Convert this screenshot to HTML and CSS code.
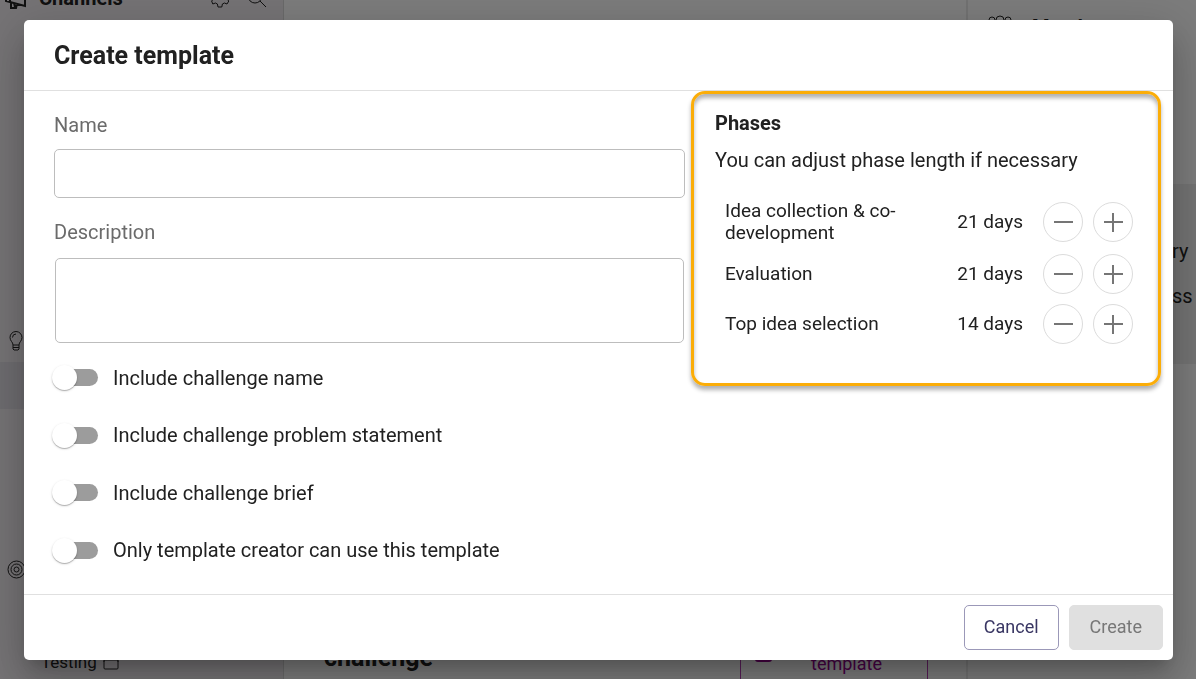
FILE: index.html
```html
<!DOCTYPE html>
<html lang="en">
<head>
<meta charset="utf-8">
<meta name="viewport" content="width=device-width, initial-scale=1">
<title>Create template</title>
<link rel="stylesheet" href="styles.css">
</head>
<body>
<div class="app" aria-hidden="true">
  <aside class="sidebar">
    <div class="sidebar-head">
      <svg width="22" height="22" viewBox="0 0 22 22" class="line-icon horn"><path d="M1 6v8l4 1 15 4V1L5 6zM5 6v9M6 15v6h5l1-4M9 16l1 4"/></svg>
      <h2>Channels</h2>
      <svg width="18" height="20" viewBox="0 0 18 20" class="line-icon thin gear"><path d="M7 1h4l.6 3 2 1 2.800-1 1.400 3-2 2v2l2 2-1.800 3-2.600-1-2 1-.6 3H7l-.6-3-2-1-2.600 1L.600 13l2-2V9l-2-2 1.400-3 2.800 1 2-1z"/></svg>
      <svg width="20" height="20" viewBox="0 0 20 20" class="line-icon thin"><circle cx="8" cy="8" r="7"/><path d="M13 13l6 6"/></svg>
    </div>
    <div class="side-item ideas"><svg width="14" height="20" viewBox="0 0 14 20" class="line-icon"><path d="M4 14c0-3-3-4-3-7.500a6 6 0 0 1 12 0C13 10 10 11 10 14zM4 16.500h6M5 19h4M4 14v4l1 1M10 14v4l-1 1M3.500 6.500A3.500 3.500 0 0 1 7 3"/></svg></div>
    <div class="side-item active"></div>
    <div class="side-item goals"><svg width="19" height="19" viewBox="0 0 19 19" class="line-icon"><circle cx="9.500" cy="9.500" r="8.500"/><circle cx="9.500" cy="9.500" r="5.500"/><circle cx="9.500" cy="9.500" r="2.500"/></svg></div>
    <div class="side-item testing">Testing <svg width="16" height="16" viewBox="0 0 16 16" class="line-icon"><rect x="1" y="6" width="14" height="9" rx="1"/><path d="M1 8V4h14v4"/></svg></div>
  </aside>
  <main class="content">
    <h2>challenge</h2>
    <div class="template-action">
      <svg width="17" height="17" viewBox="0 0 17 17" class="line-icon"><rect x="1" y="1" width="15" height="15" rx="2"/></svg>
      <span>template</span>
    </div>
  </main>
  <aside class="members">
    <div class="members-head">
      <svg width="24" height="22" viewBox="0 0 24 22" class="line-icon thin"><circle cx="12" cy="5" r="4"/><circle cx="4" cy="5" r="3"/><circle cx="20" cy="5" r="3"/><path d="M5 20c0-6 3-9 7-9s7 3 7 9z"/></svg>
      <h2>Members</h2>
    </div>
    <div class="members-card"><span>ry</span><span>ss</span></div>
  </aside>
</div>

<div class="backdrop">
  <form class="dialog" role="dialog" aria-modal="true" aria-labelledby="dialog-title">
    <header class="dialog-head"><h1 id="dialog-title">Create template</h1></header>
    <div class="dialog-body">
      <section class="fields">
        <label for="name" class="field-label">Name</label>
        <input type="text" id="name" class="text-box">
        <label for="description" class="field-label">Description</label>
        <textarea id="description" class="text-area"></textarea>
        <div class="toggles">
          <label class="toggle"><input type="checkbox" class="switch">Include challenge name</label>
          <label class="toggle"><input type="checkbox" class="switch">Include challenge problem statement</label>
          <label class="toggle"><input type="checkbox" class="switch">Include challenge brief</label>
          <label class="toggle"><input type="checkbox" class="switch">Only template creator can use this template</label>
        </div>
      </section>
      <section class="phases">
        <h2>Phases</h2>
        <p>You can adjust phase length if necessary</p>
        <ul class="phase-list">
          <li class="phase">
            <span class="phase-name">Idea collection &amp; co-development</span><span class="days">21 days</span>
            <button type="button" class="step" aria-label="Shorten idea collection"><svg width="20" height="20" viewBox="0 0 20 20"><path d="M1 10h19"/></svg></button>
            <button type="button" class="step" aria-label="Lengthen idea collection"><svg width="20" height="20" viewBox="0 0 20 20"><path d="M1 10h19M10 1v19"/></svg></button>
          </li>
          <li class="phase">
            <span class="phase-name">Evaluation</span><span class="days">21 days</span>
            <button type="button" class="step" aria-label="Shorten evaluation"><svg width="20" height="20" viewBox="0 0 20 20"><path d="M1 10h19"/></svg></button>
            <button type="button" class="step" aria-label="Lengthen evaluation"><svg width="20" height="20" viewBox="0 0 20 20"><path d="M1 10h19M10 1v19"/></svg></button>
          </li>
          <li class="phase">
            <span class="phase-name">Top idea selection</span><span class="days">14 days</span>
            <button type="button" class="step" aria-label="Shorten top idea selection"><svg width="20" height="20" viewBox="0 0 20 20"><path d="M1 10h19"/></svg></button>
            <button type="button" class="step" aria-label="Lengthen top idea selection"><svg width="20" height="20" viewBox="0 0 20 20"><path d="M1 10h19M10 1v19"/></svg></button>
          </li>
        </ul>
      </section>
    </div>
    <footer class="dialog-foot">
      <button type="button" class="btn cancel">Cancel</button>
      <button type="submit" class="btn create" disabled>Create</button>
    </footer>
  </form>
</div>
</body>
</html>
```
FILE: styles.css
```css
* { box-sizing: border-box; }
body {
  margin: 0;
  height: 100vh;
  overflow: hidden;
  font-family: Roboto, "Liberation Sans", sans-serif;
  font-size: 20px;
  line-height: 24px;
  color: #212121;
}
h1, h2, p, ul { margin: 0; padding: 0; }
button, input, textarea { font: inherit; }

/* Workspace behind the dialog */
.app { display: flex; height: 100vh; background: #f8f8f8; overflow: hidden; }
.line-icon { fill: none; stroke: currentColor; stroke-width: 2; flex: none; }
.line-icon.thin { stroke-width: 1; }
.sidebar { width: 284px; background: #ebe7eb; border-right: 1px solid #d4d4d4; }
.sidebar .line-icon { stroke-width: 1; }
.sidebar .horn { stroke-width: 2; }
.sidebar-head { display: flex; align-items: center; height: 28px; margin-top: -16px; padding: 0 16px 0 5px; }
.sidebar-head h2 { margin: 0 auto 0 12px; font-size: 20px; }
.gear { margin-right: 18px; }
.side-item { display: flex; align-items: center; }
.ideas { height: 44px; margin-top: 307px; padding-left: 9px; }
.active { height: 47px; margin-top: -1px; background: #dcd9e0; }
.goals { height: 40px; margin-top: 140px; padding-left: 7px; }
.testing { gap: 6px; margin-top: 61px; padding-left: 41px; font-size: 17px; color: #222; }
.content { display: flex; flex: 1; align-items: flex-end; justify-content: space-between; padding: 0 38px 0 40px; }
.content h2 { padding-bottom: 9px; font-size: 25px; }
.template-action { display: flex; width: 188px; height: 60px; padding: 0 14px; gap: 39px; border: 1px solid #b03ab0; border-bottom: 0; font-size: 18px; color: #90008c; }
.template-action svg { margin-top: 25px; }
.template-action span { margin-top: 32px; }
.members { width: 230px; background: #f8f8f8; border-left: 2px solid #e4e4e4; }
.members-head { display: flex; gap: 20px; height: 184px; padding: 15px 20px; }
.members-head h2 { font-size: 20px; }
.members-card { display: grid; align-content: center; gap: 21px; height: 180px; padding: 0 0 2px 204px; background: #e8e8e8; }

/* Dialog */
.backdrop { position: fixed; inset: 0; display: flex; padding: 20px 23px 19px 24px; background: rgba(0, 0, 0, .5); }
.dialog {
  display: flex;
  flex: 1;
  flex-direction: column;
  background: #fff;
  border-radius: 5px;
  box-shadow: 0 11px 15px -7px rgba(0, 0, 0, .2), 0 24px 38px 3px rgba(0, 0, 0, .14), 0 9px 46px 8px rgba(0, 0, 0, .12);
}
.dialog-head { padding: 21px 30px 19px; border-bottom: 1px solid #e0e0e0; }
.dialog-head h1 { font-size: 25px; line-height: 30px; }
.dialog-body { display: grid; flex: 1; grid-template-columns: minmax(0, 1fr) 470px; align-items: start; gap: 6px; padding: 0 12px 0 30px; }
.fields { display: flex; flex-direction: column; padding-top: 22px; }
.field-label { color: #6b6b6b; }
.text-box { height: 49px; margin: 12px 0 22px; padding: 0 14px; border: 1px solid #bdbdbd; border-radius: 5px; }
.text-area { height: 85px; margin: 14px 1px 6px; padding: 12px 14px; border: 1px solid #bdbdbd; border-radius: 5px; resize: none; }
.toggles { display: grid; grid-template-rows: repeat(4, 1fr); height: 230px; }
.toggle { display: flex; align-items: center; gap: 15px; }
.switch { display: flex; align-items: center; appearance: none; width: 38px; height: 17px; margin: 0 0 0 6px; border-radius: 9px; background: #9c9c9c; }
.switch::before {
  content: "";
  flex: none;
  width: 25px;
  height: 25px;
  margin-left: -8px;
  border-radius: 50%;
  background: #fff;
  box-shadow: 0 1px 1px rgba(0, 0, 0, .25), 0 1px 3px rgba(0, 0, 0, .12);
}
.phases {
  padding: 17px 25px 34px 21px;
  border: 3px solid #fbad08;
  border-radius: 14px;
  box-shadow: 0 4px 4px rgba(0, 0, 0, .3), inset 0 4px 4px rgba(0, 0, 0, .3);
}
.phases h2 { font-size: 20px; }
.phases p { margin: 13px 0 23px; }
.phase-list { list-style: none; padding-left: 10px; font-size: 19px; line-height: 22px; }
.phase { display: flex; align-items: center; gap: 10px; padding: 5px 0; }
.phase-name { flex: 1; padding-right: 36px; }
.days { margin-right: 10px; white-space: nowrap; }
.step { display: grid; place-items: center; width: 40px; height: 40px; padding: 0; border: 1px solid #dcdcdc; border-radius: 50%; background: #fff; }
.step svg { fill: none; stroke: #757575; stroke-width: 2; }
.dialog-foot { display: flex; justify-content: flex-end; gap: 10px; padding: 10px; border-top: 1px solid #e0e0e0; }
.btn { height: 45px; padding: 0 19px 2px; border: 1px solid #9b98b8; border-radius: 5px; background: #fff; color: #393663; font-size: 18px; }
.btn.create { padding: 0 20px 2px; border-color: #e0e0e0; background: #e0e0e0; color: #777; }
```
